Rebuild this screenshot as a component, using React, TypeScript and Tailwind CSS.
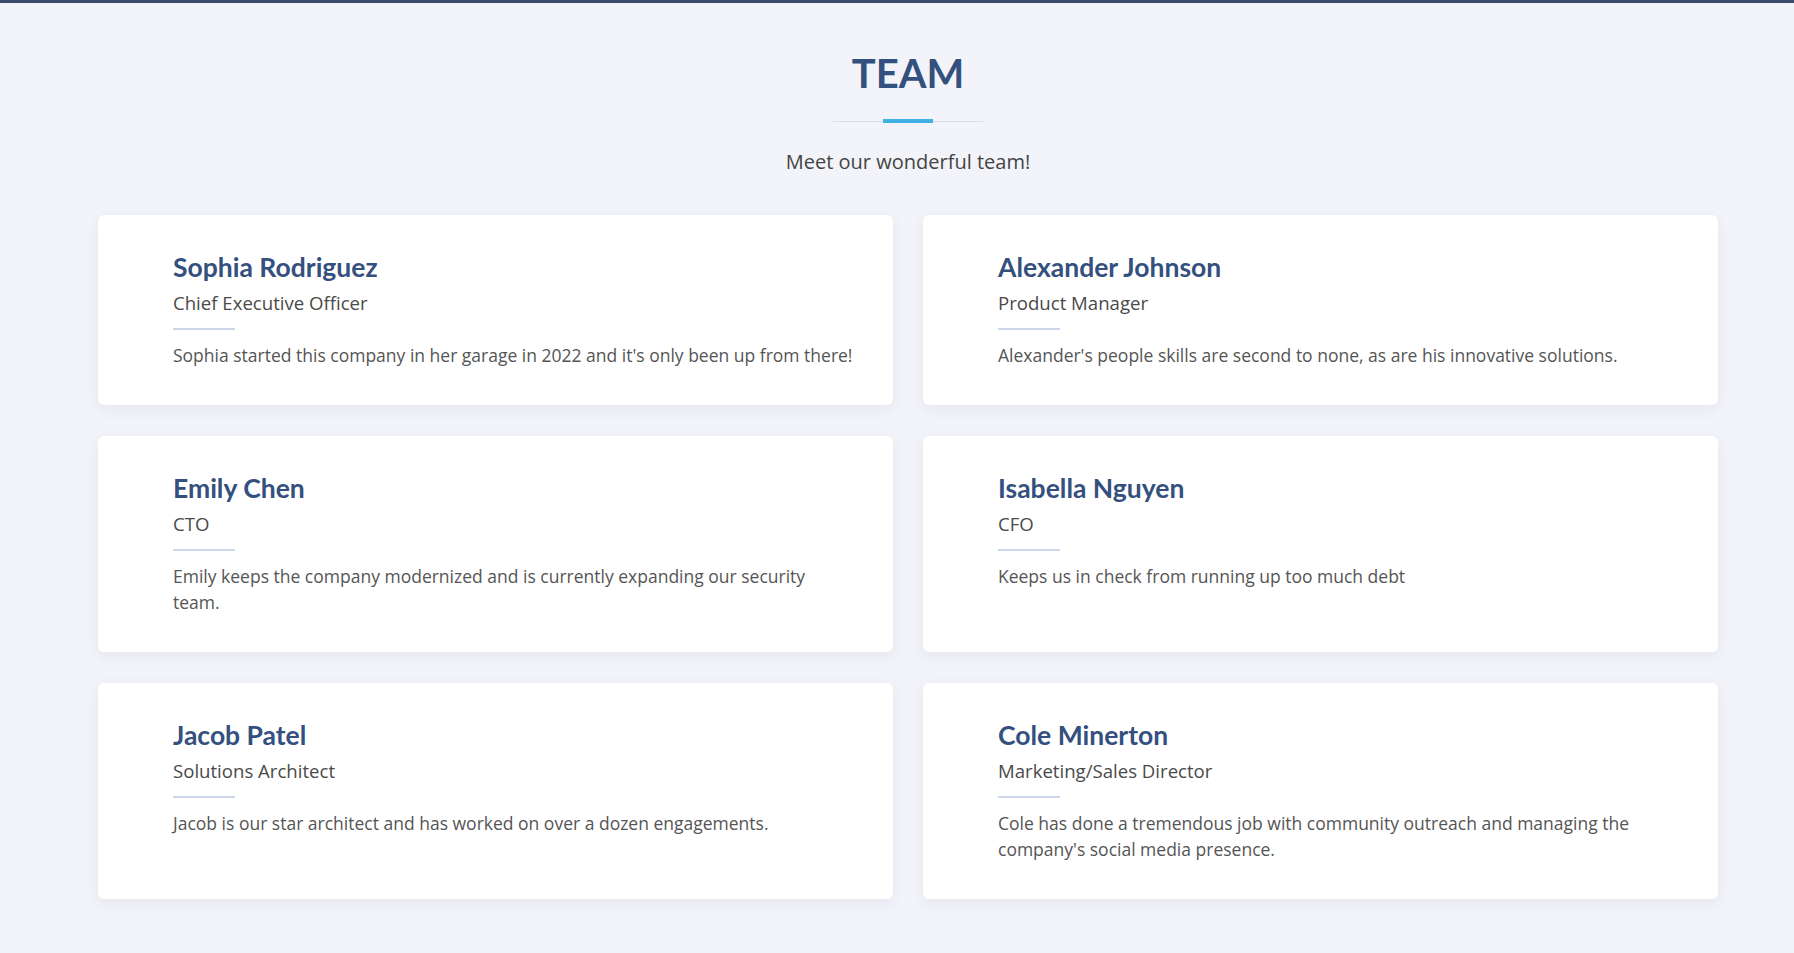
import React from "react";

interface Member {
  name: string;
  role: string;
  bio: string;
}

const members: Member[] = [
  {
    name: "Sophia Rodriguez",
    role: "Chief Executive Officer",
    bio: "Sophia started this company in her garage in 2022 and it's only been up from there!",
  },
  {
    name: "Alexander Johnson",
    role: "Product Manager",
    bio: "Alexander's people skills are second to none, as are his innovative solutions.",
  },
  {
    name: "Emily Chen",
    role: "CTO",
    bio: "Emily keeps the company modernized and is currently expanding our security team.",
  },
  {
    name: "Isabella Nguyen",
    role: "CFO",
    bio: "Keeps us in check from running up too much debt",
  },
  {
    name: "Jacob Patel",
    role: "Solutions Architect",
    bio: "Jacob is our star architect and has worked on over a dozen engagements.",
  },
  {
    name: "Cole Minerton",
    role: "Marketing/Sales Director",
    bio: "Cole has done a tremendous job with community outreach and managing the company's social media presence.",
  },
];

function MemberCard({ member }: { member: Member }) {
  return (
    <div className="rounded-md bg-white pt-[37px] pb-[37px] pl-[75px] pr-[38px] shadow-[0_4px_14px_rgba(60,70,110,0.08)]">
      <h3 className="font-['Lato',sans-serif] text-[26.5px] font-bold leading-[30px] text-[#34507e]">
        {member.name}
      </h3>
      <p className="mt-[7px] font-['Open_Sans',sans-serif] text-[18.6px] leading-[27px] text-[#4a4a4a]">
        {member.role}
      </p>
      <div className="mt-[12px] h-[2px] w-[62px] bg-[#cdd6e8]" />
      <p className="mt-[12px] font-['Open_Sans',sans-serif] text-[17.5px] leading-[26px] text-[#555555]">
        {member.bio}
      </p>
    </div>
  );
}

export default function App() {
  return (
    <div className="min-h-[953px] border-t-[3px] border-[#3d4b6b] bg-[#f3f4f9] pl-[98px] pr-[76px] pb-[55px]">
      <div className="flex flex-col items-center pt-[46px]">
        <h2 className="font-['Lato',sans-serif] text-[40px] font-bold leading-[48px] text-[#34507e]">
          TEAM
        </h2>
        <div className="mt-[22px] flex items-center">
          <div className="h-px w-[50px] bg-[#dcdde3]" />
          <div className="h-[4px] w-[50px] bg-[#3fb0e3]" />
          <div className="h-px w-[50px] bg-[#dcdde3]" />
        </div>
        <p className="mt-[24px] font-['Open_Sans',sans-serif] text-[20px] leading-[30px] text-[#444444]">
          Meet our wonderful team!
        </p>
      </div>
      <div className="mt-[38px] grid grid-cols-2 gap-x-[30px] gap-y-[31px]">
        {members.map((m) => (
          <MemberCard key={m.name} member={m} />
        ))}
      </div>
    </div>
  );
}
